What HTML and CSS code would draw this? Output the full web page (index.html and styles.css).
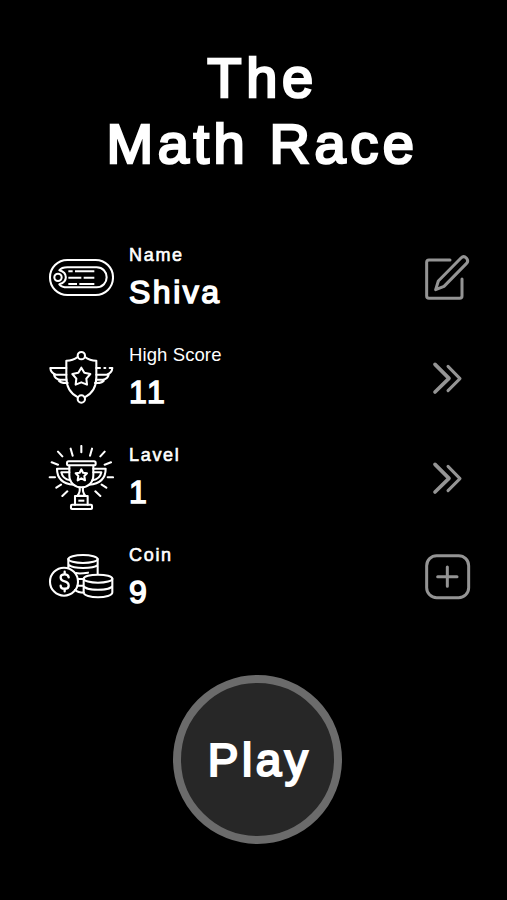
FILE: index.html
```html
<!DOCTYPE html>
<html lang="en">
  <head>
    <meta charset="UTF-8" />
    <title>The Math Race</title>
    <meta name="viewport" content="width=device-width, initial-scale=1.0" />
    <link rel="stylesheet" href="styles.css">
  </head>
  <body>
    <h1>The<br />Math Race</h1>

    <main class="stats">
      <div class="row">
        <svg class="icon" viewBox="24 15 198 198">
          <rect x="30" y="60" width="189" height="105" rx="52" />
          <path d="M58 91C64 83 72 82 82 82H170C188 82 200 96 200 112S188 142 170 142H82C72 142 64 141 58 133C84 126 84 98 58 91Z" />
          <circle cx="54" cy="112" r="11" />
          <path class="flat" d="M85 94H98M105 94H163M85 113H124M131 113H163M85 132H111M118 132H163" />
        </svg>
        <div class="info">
          <span class="label">Name</span>
          <span class="value">Shiva</span>
        </div>
        <svg class="action" viewBox="21 39 150 150">
          <path d="M105 60H42Q35 60 35 67V168Q35 175 42 175H134Q141 175 141 168V117" />
          <path d="M62 149L70 123L138 54Q146 46 154 54Q162 63 154 71L87 139Z" />
        </svg>
      </div>

      <div class="row">
        <svg class="icon" viewBox="24 15 198 198">
          <path d="M113 51Q99 62 79 62V112C79 142 91 161 114 172M135 51Q149 62 169 62V112C169 142 157 161 134 172" />
          <circle cx="124" cy="47" r="11" />
          <circle cx="124" cy="177" r="11" />
          <path d="M124 83L133 98L151 102L139 116L141 134L124 127L107 134L109 116L97 102L115 98Z" />
          <path d="M79 84H31Q32 99 48 104H79M42 104Q44 117 60 119H79M55 120Q60 130 83 129M169 84H180M193 84H196M209 84H217Q216 99 200 104H169M206 104Q204 117 188 119H169M193 120Q188 130 165 129" />
        </svg>
        <div class="info">
          <span class="label thin">High Score</span>
          <span class="value">11</span>
        </div>
        <svg class="action" viewBox="21 9 150 150">
          <path class="thick" d="M60 43L102 85L60 126" />
          <path d="M99 49L135 86L99 122" />
        </svg>
      </div>

      <div class="row">
        <svg class="icon" viewBox="24 15 198 198">
          <path d="M124 18V37M92 26L98 47M156 26L150 47M54 35L67 49M194 35L181 49M35 67L54 74M213 67L194 74M29 112H45M203 112H219M49 143L63 134M199 143L185 134M67 168L82 154M181 168L166 154" />
          <rect x="81" y="64" width="86" height="12" rx="5" />
          <path d="M88 77V106C88 129 105 142 124 142S160 129 160 106V77" />
          <path d="M88 86H51C51 113 66 131 101 134M88 97H64Q68 117 91 121M160 86H197C197 113 182 131 147 134M160 97H184Q180 117 157 121" />
          <path d="M124 88L129 98L141 100L133 108L135 121L124 115L113 121L115 108L107 100L119 98Z" />
          <path d="M119 143Q121 158 112 167H136Q127 158 129 143M105 194V168H143V194" />
          <rect x="93" y="194" width="63" height="13" rx="3" />
          <path class="flat" d="M115 182H133" />
        </svg>
        <div class="info">
          <span class="label">Lavel</span>
          <span class="value">1</span>
        </div>
        <svg class="action" viewBox="21 9 150 150">
          <path class="thick" d="M60 43L102 85L60 126" />
          <path d="M99 49L135 86L99 122" />
        </svg>
      </div>

      <div class="row">
        <svg class="icon" viewBox="24 15 198 198">
          <circle cx="72" cy="125" r="42" />
          <path class="dollar" d="M86 112Q85 103 74 103Q62 103 62 112Q62 122 74 124Q86 127 86 137Q86 146 74 146Q62 146 62 137M74 95V102M74 147V154" />
          <ellipse cx="129" cy="57" rx="44" ry="12" />
          <path d="M85 57V83M173 57V102M87 75Q98 84 129 84Q163 84 173 75M108 99Q118 102 144 98" />
          <ellipse cx="174" cy="116" rx="43" ry="12" />
          <path d="M131 116V157C131 177 217 177 217 157V116M131 136C131 154 217 154 217 136M114 117H131M113 137H131M105 150Q114 158 132 158" />
        </svg>
        <div class="info">
          <span class="label">Coin</span>
          <span class="value">9</span>
        </div>
        <svg class="action" viewBox="21 39 150 150">
          <rect x="35" y="47" width="126" height="126" rx="30" />
          <path d="M68 110H126M97 81V139" />
        </svg>
      </div>
    </main>

    <button class="play">Play</button>
  </body>
</html>
```

FILE: styles.css
```css
body {
  font-family: "Liberation Sans", Arial, sans-serif;
  background-color: #000;
  color: #fff;
  display: flex;
  flex-direction: column;
  align-items: center;
  height: 900px;
  margin: 0;
  overflow: hidden;
}

h1 {
  margin: 45px 0 51px;
  padding-left: 18px;
  font-size: 56px;
  font-weight: normal;
  line-height: 66px;
  letter-spacing: 4.6px;
  text-align: center;
  -webkit-text-stroke: 2.6px #fff;
}

.stats {
  width: 100%;
}

.row {
  display: flex;
  align-items: center;
  height: 100px;
  padding: 0 35px 0 48px;
  box-sizing: border-box;
}

.icon,
.action {
  fill: none;
  stroke-linecap: round;
  stroke-linejoin: round;
}

.icon {
  width: 66px;
  height: 66px;
  stroke: #fff;
  stroke-width: 6.2;
}

.action {
  width: 50px;
  height: 50px;
  stroke: #949494;
  stroke-width: 9;
}

.flat {
  stroke-linecap: butt;
}

.thick {
  stroke-width: 11;
}

.dollar {
  stroke-width: 7;
}

.info {
  flex: 1;
  display: flex;
  flex-direction: column;
  gap: 7px;
  padding: 1px 0 0 15px;
}

.label {
  font-size: 18px;
  line-height: 20px;
  letter-spacing: 1.7px;
  -webkit-text-stroke: 0.6px #fff;
}

.label.thin {
  font-size: 18.5px;
  letter-spacing: 0.1px;
  -webkit-text-stroke: 0;
}

.value {
  font-size: 32px;
  line-height: 40px;
  letter-spacing: 2.5px;
  -webkit-text-stroke: 1.5px #fff;
}

.play {
  width: 169px;
  height: 169px;
  margin: 47px 0 0 8px;
  padding: 1px 0 0 4px;
  border: 8px solid #6b6b6b;
  border-radius: 50%;
  background-color: #272727;
  color: #fff;
  font-family: inherit;
  font-size: 46px;
  letter-spacing: 3.5px;
  -webkit-text-stroke: 2.2px #fff;
  cursor: pointer;
}
```
